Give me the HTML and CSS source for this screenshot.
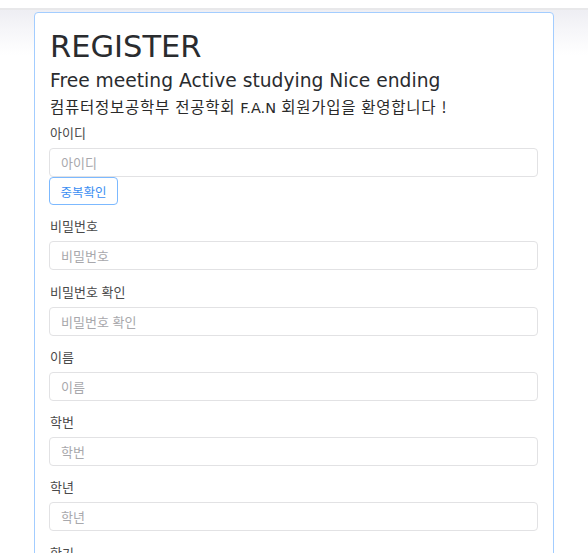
FILE: index.html
```html
<!DOCTYPE html>
<html lang="ko">
<head>
<meta charset="utf-8">
<title>REGISTER</title>
<link rel="stylesheet" href="styles.css">
</head>
<body>
<div class="topbar"></div>
<main class="page">
  <section class="card">
    <h1 class="title">REGISTER</h1>
    <h2 class="slogan">Free meeting Active studying Nice ending</h2>
    <p class="welcome">컴퓨터정보공학부 전공학회 <span class="latin">F.A.N</span> 회원가입을 환영합니다 !</p>
    <form class="form">
      <div class="group">
        <label class="label">아이디</label>
        <input class="input" type="text" placeholder="아이디">
        <button type="button" class="btn">중복확인</button>
      </div>
      <div class="group">
        <label class="label">비밀번호</label>
        <input class="input" type="password" placeholder="비밀번호">
      </div>
      <div class="group">
        <label class="label">비밀번호 확인</label>
        <input class="input" type="password" placeholder="비밀번호 확인">
      </div>
      <div class="group">
        <label class="label">이름</label>
        <input class="input" type="text" placeholder="이름">
      </div>
      <div class="group">
        <label class="label">학번</label>
        <input class="input" type="text" placeholder="학번">
      </div>
      <div class="group">
        <label class="label">학년</label>
        <input class="input" type="text" placeholder="학년">
      </div>
      <div class="group">
        <label class="label">학기</label>
        <input class="input" type="text" placeholder="학기">
      </div>
    </form>
  </section>
</main>
</body>
</html>
```
FILE: styles.css
```css
html, body {
  margin: 0;
  padding: 0;
  background: #ffffff;
}
body {
  font-family: "Noto Sans CJK KR", "Noto Sans", sans-serif;
  color: #333;
  overflow: hidden;
}
.topbar {
  height: 8px;
  background: #ffffff;
  border-bottom: 2px solid #e8e8ea;
}
.page {
  background: linear-gradient(to bottom, #eeeef3 0, #f6f6f9 20px, #ffffff 45px);
  padding: 2px 34px 0 34px;
}
.card {
  background: #ffffff;
  border: 1px solid #a3cdff;
  border-radius: 4px;
  padding: 16px 15px 40px 14px;
}
.title {
  margin: 0;
  font-family: "DejaVu Sans", sans-serif;
  font-weight: normal;
  font-size: 30.5px;
  line-height: 36px;
  color: #2a2c2f;
  padding-left: 1px;
}
.slogan {
  margin: 4px 0 0 0;
  font-family: "DejaVu Sans", sans-serif;
  font-weight: normal;
  font-size: 18.7px;
  line-height: 24px;
  color: #2a2c2f;
  padding-left: 1px;
}
.welcome {
  margin: 2px 0 0 0;
  font-size: 15.5px;
  line-height: 22px;
  letter-spacing: 0.75px;
  color: #2a2a2a;
  padding-left: 1px;
}
.latin {
  font-family: "DejaVu Sans", sans-serif;
  font-size: 14.5px;
  letter-spacing: 0;
}
.form {
  margin-top: 4px;
}
.group {
  display: flex;
  flex-direction: column;
  align-items: flex-start;
  margin-bottom: 11.25px;
}
.label {
  font-size: 13px;
  line-height: 20px;
  color: #4a4a4a;
  margin-bottom: 5px;
  padding-left: 1px;
}
.input {
  box-sizing: border-box;
  width: 100%;
  height: 29px;
  border: 1px solid #e2e2e4;
  border-radius: 4px;
  background: #fff;
  padding: 0 11px;
  font-family: "Noto Sans CJK KR", sans-serif;
  font-size: 13px;
  color: #333;
  outline: none;
}
.input::placeholder {
  color: #a8a8ac;
}
.btn {
  box-sizing: border-box;
  height: 28px;
  width: 69px;
  border: 1px solid #7cb9ff;
  border-radius: 4px;
  background: #fff;
  color: #3b8ef2;
  font-family: "Noto Sans CJK KR", sans-serif;
  font-size: 12.5px;
  padding: 0;
}
```
